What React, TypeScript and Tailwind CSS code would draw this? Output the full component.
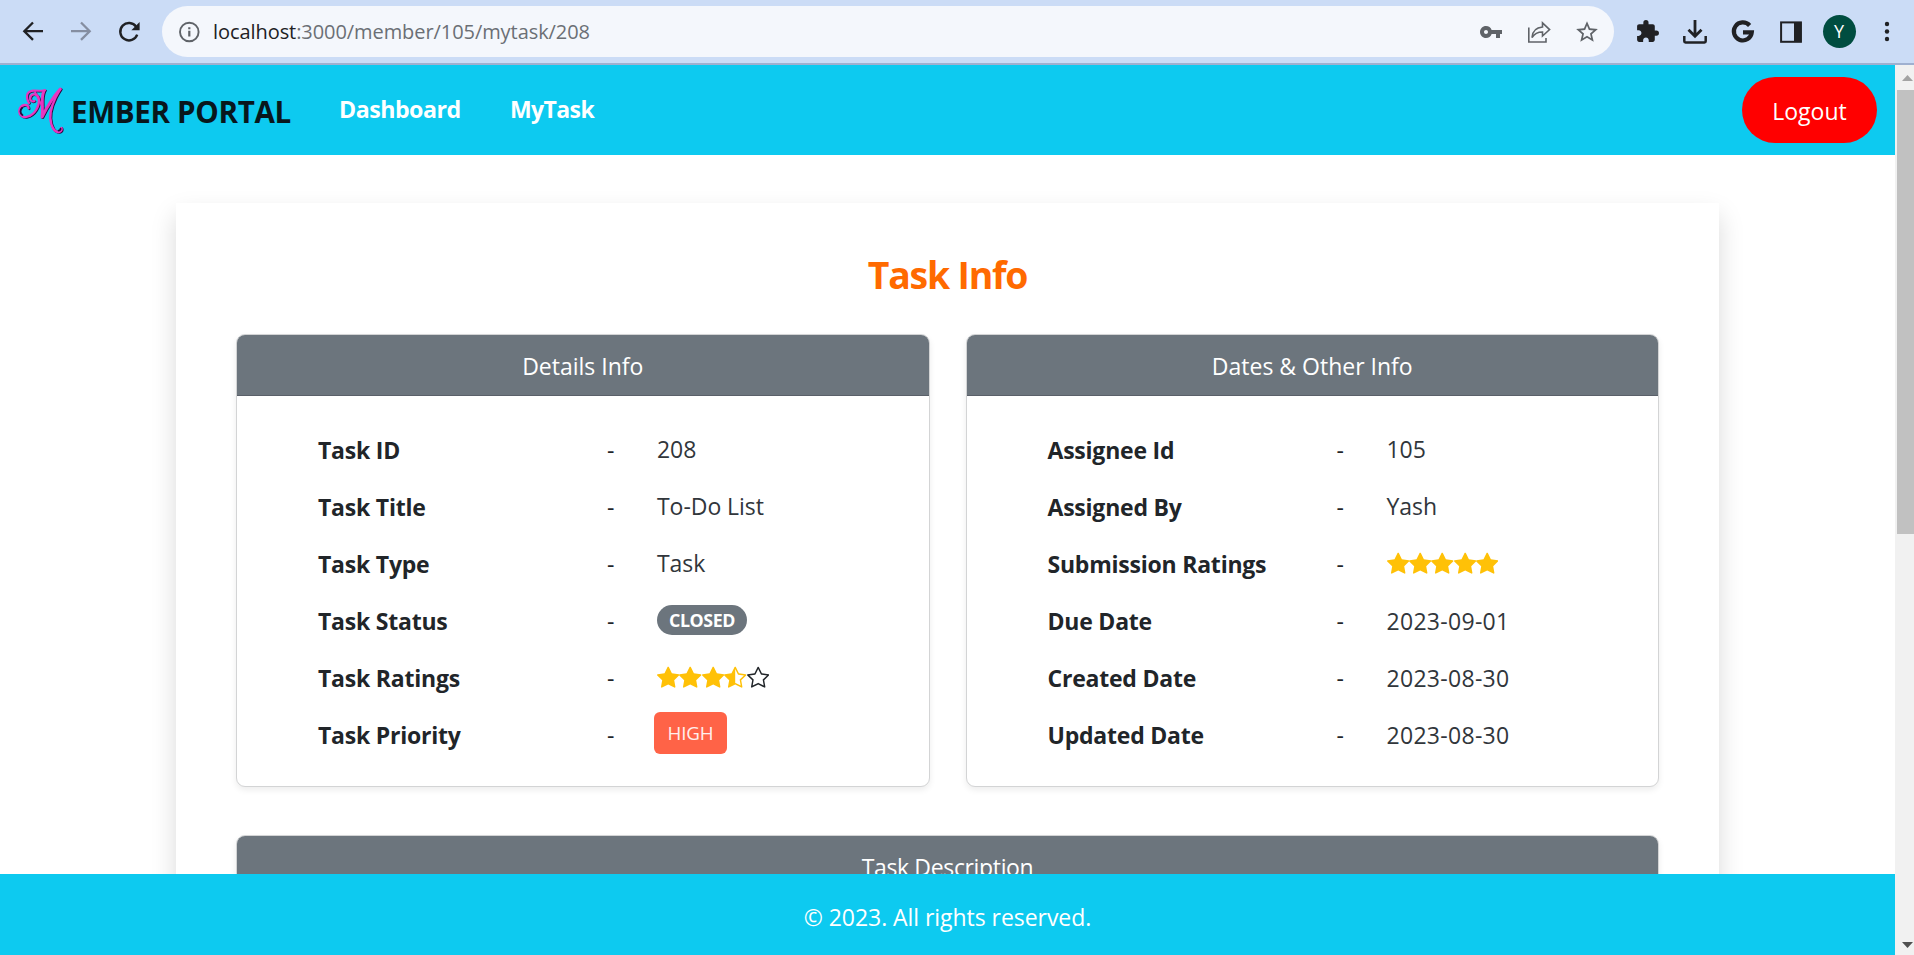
import type { ReactNode } from "react";
import { MdExtension, MdStarBorder, MdVpnKey } from "react-icons/md";
import { BsStar, BsStarFill, BsStarHalf } from "react-icons/bs";

function Cell({ children }: { children: ReactNode }) {
  return <div className="flex h-[63px] w-12 shrink-0 items-center justify-center">{children}</div>;
}

function Glyph({ children, className }: { children: ReactNode; className?: string }) {
  return (
    <svg viewBox="0 0 48 63" className={`h-[63px] w-12 shrink-0 ${className ?? ""}`} fill="none" stroke="currentColor">
      {children}
    </svg>
  );
}

function BrowserBar() {
  return (
    <header className="flex h-[65px] shrink-0 items-center border-b-2 border-[#9fb0d0] bg-[#cbdcf6] pl-[9px] text-[#202124]">
      <Glyph>
        <path d="M34 31.2H15.5M24 22.5L15.3 31.2L24 39.9" strokeWidth="2.3" />
      </Glyph>
      <Glyph className="text-[#858ea1]">
        <path d="M14 31.2H32.5M24 22.5L32.7 31.2L24 39.9" strokeWidth="2.3" />
      </Glyph>
      <Glyph>
        <path d="M31.2 26.8A8.7 8.7 0 1 0 32.2 34.6" strokeWidth="2.4" />
        <path d="M34.6 22V30.2H26.4Z" fill="currentColor" stroke="none" />
      </Glyph>
      <div className="ml-[9px] flex h-[51px] w-[1452px] items-center rounded-full bg-[#f4f7fc] pl-[16px] pr-[3px] text-[#5f6368]">
        <svg viewBox="0 0 24 24" className="mt-px h-6 w-6" fill="none" stroke="currentColor">
          <circle cx="11.3" cy="12" r="9.3" strokeWidth="1.9" />
          <path d="M11.3 10.8V16.6M11.3 7.3V9.3" strokeWidth="2.2" />
        </svg>
        <span className="ml-[11px] text-[20px] leading-[30px] tracking-[-0.07px] text-[#6b6f75]">
          <span className="text-[#202124]">localhost</span>:3000/member/105/mytask/208
        </span>
        <div className="-my-1.5 ml-auto flex">
          <Cell>
            <MdVpnKey size={24} />
          </Cell>
          <Glyph>
            <path d="M13.8 27.5V42H31V38" strokeWidth="1.6" />
            <path d="M17 37.5C17.5 31 21.5 27.5 27.5 27V22.8L34.6 29.6L27.5 36V32C23 32 19.5 33.5 17 37.5Z" strokeWidth="1.6" />
          </Glyph>
          <Cell>
            <MdStarBorder size={26} />
          </Cell>
        </div>
      </div>
      <div className="ml-[9px] flex">
        <Cell>
          <MdExtension size={25} />
        </Cell>
        <Glyph>
          <path d="M24 20V36M17.5 29.8L24 36.2L30.5 29.8" strokeWidth="2.8" />
          <path d="M13.3 36V41.2Q13.3 42.4 14.5 42.4H33.5Q34.7 42.4 34.7 41.2V36" strokeWidth="2.5" />
        </Glyph>
        <Glyph>
          <path d="M30.6 25.5A9 9 0 1 0 32.8 32.3H24" strokeWidth="4.2" />
        </Glyph>
        <Glyph>
          <rect x="14.1" y="22.4" width="19.8" height="19.4" strokeWidth="2" />
          <rect x="27" y="22" width="7.4" height="20" fill="currentColor" stroke="none" />
        </Glyph>
        <Cell>
          <div className="flex h-[33px] w-[33px] items-center justify-center rounded-full bg-[#004d40] text-[18px] text-white">Y</div>
        </Cell>
        <Glyph>
          <g fill="currentColor" stroke="none">
            <circle cx="24" cy="24" r="2.2" />
            <circle cx="24" cy="31.5" r="2.2" />
            <circle cx="24" cy="39" r="2.2" />
          </g>
        </Glyph>
      </div>
    </header>
  );
}

function LogoStrokes() {
  return (
    <>
      <path d="M20.6 32.5C20.5 28 14.5 27.5 11.8 32.5C9.6 38 14 42 19 40.8C27 39 31.5 30 31 23.5C30.5 18 25 17 22.8 20.2C21 23.5 23.5 26.5 26.5 25" strokeWidth="2.2" />
      <path d="M21 27C16.5 19 20 14.6 26 14.6C30 14.8 33.5 15 37 14.2" strokeWidth="2.2" />
      <path d="M36 15C32.5 22 35.5 30 34 41C39 31 45 21 52.3 13" strokeWidth="2.9" />
      <path d="M52.3 13C45 25 42 34 42.3 42C43 51 46.5 56.5 51 56C53.5 55.4 54 53.5 53.4 52" strokeWidth="2.4" />
      <path d="M27 16L34.5 31" strokeWidth="1.8" />
    </>
  );
}

function NavBar() {
  return (
    <nav className="flex h-[90px] shrink-0 items-center bg-[#0dcaf0] pl-2 pr-[18px]">
      <svg viewBox="0 0 60 70" className="mt-0.5 h-[70px] w-[60px]" fill="none" strokeLinecap="round" strokeLinejoin="round">
        <g stroke="#2b0a3c" transform="translate(0.8 0.6)">
          <LogoStrokes />
        </g>
        <g stroke="#e935c1">
          <LogoStrokes />
        </g>
        <path d="M14.4 39C11.8 37 12 34 14 32M50.5 54.6C52 54.6 52.8 53.5 52.5 52.6" stroke="#2b0a3c" strokeWidth="1.8" />
      </svg>
      <span className="ml-[3px] w-[268px] pt-[3px] text-[29.6px] font-bold leading-[45px] tracking-[-0.35px] text-[#08171c]">EMBER PORTAL</span>
      <a className="w-[171px] pb-[3px] text-[23.2px] font-bold leading-9 tracking-[-0.5px] text-white">Dashboard</a>
      <a className="pb-[3px] text-[23px] font-bold leading-9 tracking-[-0.6px] text-white">MyTask</a>
      <button className="ml-auto flex h-[66px] w-[135px] items-center justify-center rounded-full bg-[#ff0000] pt-px text-[23px] leading-9 text-white">
        Logout
      </button>
    </nav>
  );
}

function Stars({ value }: { value: number }) {
  return (
    <span className="flex text-[#ffc107]">
      {[1, 2, 3, 4, 5].map((n) =>
        value >= n ? (
          <BsStarFill key={n} size={22.4} />
        ) : value >= n - 0.5 ? (
          <BsStarHalf key={n} size={22.4} />
        ) : (
          <BsStar key={n} size={22.4} className="text-[#212529]" />
        ),
      )}
    </span>
  );
}

function CardHeader({ children }: { children: ReactNode }) {
  return (
    <div className="flex h-[61px] items-center justify-center border-b border-[#5a6069] bg-[#6c757d] pt-[2px] text-[23px] leading-9 text-white">
      {children}
    </div>
  );
}

type Row = [string, ReactNode];

function InfoCard({ title, rows }: { title: string; rows: Row[] }) {
  return (
    <section className="h-[453px] flex-1 overflow-hidden rounded-[9px] border border-[#d3d4d5] bg-white shadow-[0_3px_6px_rgba(0,0,0,0.075)]">
      <CardHeader>{title}</CardHeader>
      <dl className="pl-[81px] pt-[25px]">
        {rows.map(([label, value], i) => (
          <div key={label} className="flex h-[57px] items-center text-[23px] leading-9 text-[#212529]">
            <dt className="w-[289px] font-bold tracking-[-0.22px]">{label}</dt>
            <span className="w-[50px]">-</span>
            <dd
              className={
                typeof value !== "string"
                  ? ""
                  : i < 3
                    ? "pb-[2px] tracking-[-0.05px] text-[#31363b]"
                    : "tracking-[0.3px] text-[#31363b]"
              }
            >
              {value}
            </dd>
          </div>
        ))}
      </dl>
    </section>
  );
}

const details: Row[] = [
  ["Task ID", "208"],
  ["Task Title", "To-Do List"],
  ["Task Type", "Task"],
  [
    "Task Status",
    <span className="mb-0.5 flex h-[30px] w-[90px] items-center justify-center rounded-full bg-[#6c757d] pt-0.5 text-[17.8px] font-bold leading-none tracking-[-0.4px] text-white">
      CLOSED
    </span>,
  ],
  ["Task Ratings", <Stars value={3.5} />],
  [
    "Task Priority",
    <span className="-ml-[3px] mb-[3px] flex h-[42px] w-[73px] items-center justify-center rounded-[6px] bg-[#ff6347] pt-px text-[18.8px] leading-none tracking-[-0.2px] text-[#fff0ed]">
      HIGH
    </span>,
  ],
];

const dates: Row[] = [
  ["Assignee Id", "105"],
  ["Assigned By", "Yash"],
  ["Submission Ratings", <Stars value={5} />],
  ["Due Date", "2023-09-01"],
  ["Created Date", "2023-08-30"],
  ["Updated Date", "2023-08-30"],
];

function ScrollBar() {
  return (
    <div className="flex w-[19px] flex-col bg-[#f1f1f1] pl-[2px]">
      <svg viewBox="0 0 17 25" className="h-[25px] w-[17px]">
        <path d="M5 16L10.5 10L16 16Z" fill="#a3a3a3" />
      </svg>
      <div className="h-[444px] bg-[#c1c1c1]" />
      <svg viewBox="0 0 17 25" className="mt-auto h-[25px] w-[17px]">
        <path d="M5 12H16L10.5 18Z" fill="#505050" />
      </svg>
    </div>
  );
}

export default function App() {
  return (
    <div className="flex h-[955px] w-[1914px] flex-col overflow-hidden bg-white font-['Open_Sans','Noto_Sans',sans-serif]">
      <BrowserBar />
      <div className="flex min-h-0 flex-1">
        <div className="flex min-w-0 flex-1 flex-col">
          <NavBar />
          <main className="min-h-0 flex-1 overflow-hidden px-44 pt-12">
            <div className="h-[900px] bg-white px-[60px] pt-[45px] shadow-[0_12px_24px_rgba(0,0,0,0.15)]">
              <h2 className="h-[86px] text-center text-[37.4px] font-bold leading-[53px] tracking-[-1.2px] text-[#ff6a00]">Task Info</h2>
              <div className="flex gap-9">
                <InfoCard title="Details Info" rows={details} />
                <InfoCard title="Dates & Other Info" rows={dates} />
              </div>
              <section className="mt-12 overflow-hidden rounded-[9px] border border-[#d3d4d5] bg-white shadow-[0_3px_6px_rgba(0,0,0,0.075)]">
                <CardHeader>
                  <span className="tracking-[-0.35px]">Task Description</span>
                </CardHeader>
              </section>
            </div>
          </main>
          <footer className="flex h-[81px] shrink-0 items-center justify-center bg-[#0dcaf0] pt-[5px] text-[23px] leading-9 tracking-[-0.05px] text-white">
            © 2023. All rights reserved.
          </footer>
        </div>
        <ScrollBar />
      </div>
    </div>
  );
}
